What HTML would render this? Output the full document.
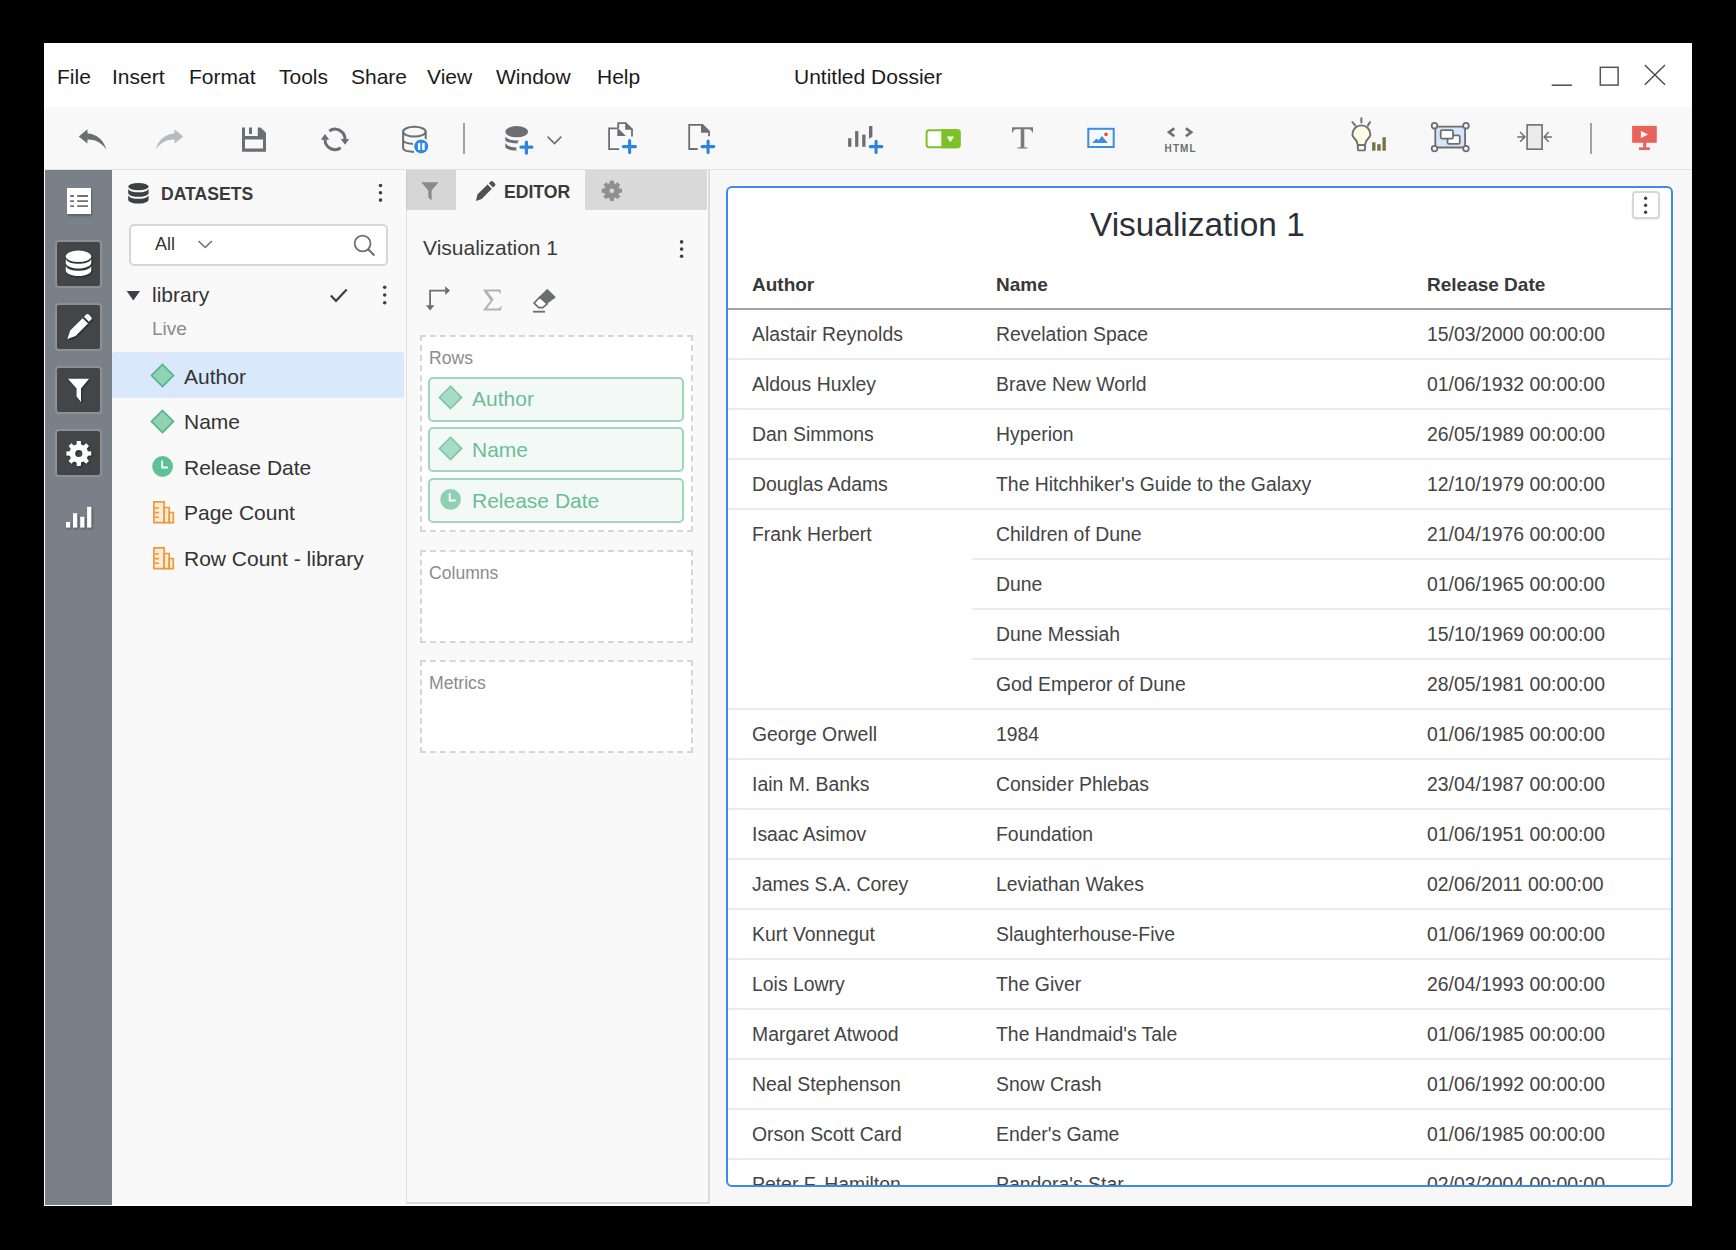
<!DOCTYPE html>
<html><head><meta charset="utf-8">
<style>
*{margin:0;padding:0;box-sizing:border-box}
html,body{width:1736px;height:1250px;background:#000;overflow:hidden;font-family:"Liberation Sans",sans-serif;position:relative}
div,span,svg{position:absolute}
.t{white-space:nowrap;line-height:1}
.mi{font-size:21px;color:#1a1a1a;top:66px}
.sbtn{left:55px;width:47px;height:48px;background:#434548;border:2px solid #8d9094;border-radius:4px}
.fld{font-size:21px;color:#333;left:184px}
.pill{left:428px;width:256px;height:45px;background:#f3f9f6;border:2px solid #9fd6bd;border-radius:5px}
.ptxt{font-size:21px;color:#6cbd97;left:472px}
.dz{left:420px;width:273px;border:2px dashed #d6d6d6;background:#fff}
.dzl{font-size:17.6px;color:#8c8c8c;left:429px}
.row{left:728px;width:943px;height:2px;background:#ebebeb}
.c{font-size:19.4px;color:#444}
.h{font-weight:bold;color:#383838;font-size:19px}
</style></head>
<body>
<!-- window -->
<div style="left:44px;top:43px;width:1648px;height:1163px;background:#fff"></div>
<!-- toolbar -->
<div style="left:45px;top:107px;width:1647px;height:63px;background:#f8f8f8;border-bottom:1px solid #e2e2e2"></div>
<!-- left sidebar -->
<div style="left:45px;top:170px;width:67px;height:1035px;background:#7a8088"></div>
<!-- datasets panel -->
<div style="left:112px;top:170px;width:294px;height:1035px;background:#f9f9f9"></div>
<!-- editor panel -->
<div style="left:406px;top:170px;width:304px;height:1034px;background:#f9f9f9;border-left:1px solid #e0e0e0;border-right:2px solid #dcdcdc;border-bottom:2px solid #d9d9d9"></div>
<!-- canvas -->
<div style="left:710px;top:170px;width:982px;height:1036px;background:#f7f7f7"></div>

<!-- menu -->
<span class="t mi" style="left:57px">File</span>
<span class="t mi" style="left:112px">Insert</span>
<span class="t mi" style="left:189px">Format</span>
<span class="t mi" style="left:279px">Tools</span>
<span class="t mi" style="left:351px">Share</span>
<span class="t mi" style="left:427px">View</span>
<span class="t mi" style="left:496px">Window</span>
<span class="t mi" style="left:597px">Help</span>
<span class="t mi" style="left:794px">Untitled Dossier</span>


<!-- window controls -->
<svg style="left:1540px;top:55px" width="140" height="45" viewBox="0 0 140 45">
 <line x1="11.7" y1="30.2" x2="31.9" y2="30.2" stroke="#4a4a4a" stroke-width="1.5"/>
 <rect x="60.3" y="12.3" width="17.8" height="17.8" fill="none" stroke="#555" stroke-width="1.5"/>
 <path d="M104.8,10.1 L125,29.8 M125,10.1 L104.8,29.8" stroke="#4a4a4a" stroke-width="1.4"/>
</svg>
<!-- toolbar icons -->
<svg style="left:74px;top:124px" width="36" height="30"><path d="M4.8,12.5 L13.4,5.2 L13.6,9.6 C22,10 29,15 32.4,25.4 C27,18.5 21,15.5 13.6,15.6 L13.3,19.6 Z" fill="#6d6e71"/></svg>
<svg style="left:152px;top:124px;transform:scaleX(-1)" width="36" height="30"><path d="M4.8,12.5 L13.4,5.2 L13.6,9.6 C22,10 29,15 32.4,25.4 C27,18.5 21,15.5 13.6,15.6 L13.3,19.6 Z" fill="#b9babc"/></svg>
<svg style="left:242px;top:127px" width="25" height="26"><path fill-rule="evenodd" fill="#6d6e71" d="M0,0.4 H3 V9 H15.8 V0.4 H18.5 L24,5.8 V24.8 H0 Z M3,12.6 V21.4 H21 V12.6 Z M7,0.4 H10 V7 H7 Z"/></svg>
<svg style="left:316px;top:122px" width="38" height="34">
 <path d="M13.3,9.0 A10,10 0 0 1 29,17.4" fill="none" stroke="#6d6e71" stroke-width="3"/>
 <path d="M24.8,17 L33.2,17 L29,22.8 Z" fill="#6d6e71"/>
 <path d="M24.7,25.8 A10,10 0 0 1 9,17.4" fill="none" stroke="#6d6e71" stroke-width="3"/>
 <path d="M4.8,17.8 L13.2,17.8 L9,12 Z" fill="#6d6e71"/>
</svg>
<svg style="left:396px;top:120px" width="40" height="38">
 <ellipse cx="18.4" cy="11.7" rx="11.3" ry="4.9" fill="none" stroke="#6d6e71" stroke-width="2"/>
 <path d="M7.1,11.7 V28 C7.1,30.6 12,31.6 18,31.9 M29.7,11.7 V19.5 M7.1,20 C7.1,22.6 12,23.6 17,23.9" fill="none" stroke="#6d6e71" stroke-width="2"/>
 <circle cx="25.2" cy="26.4" r="8.6" fill="#f8f8f8"/>
 <circle cx="25.2" cy="26.4" r="7" fill="#2e8ae6"/>
 <rect x="22" y="23.1" width="2.3" height="6.8" fill="#fff"/><rect x="26.1" y="23.1" width="2.6" height="6.8" fill="#fff"/>
</svg>
<div style="left:463px;top:123px;width:2px;height:31px;background:#a3a3a3"></div>
<svg style="left:500px;top:120px" width="40" height="38">
 <ellipse cx="16.7" cy="11.7" rx="11.4" ry="5.6" fill="#6d6e71"/>
 <path d="M5.3,16.4 C8,20 14,20.5 18.8,20.5 L17.2,23.4 C11,23.4 6.5,22 5.3,20.5 Z" fill="#6d6e71"/>
 <path d="M5.3,23.1 C8,26.7 12,27.5 16.4,27.5 L16.4,30.5 C10,30.3 6.5,29 5.3,27.2 Z" fill="#6d6e71"/>
 <path d="M26.4,22 V33.2 M21,27.1 H31.9" stroke="#2f83db" stroke-width="3.2" stroke-linecap="round"/>
</svg>
<svg style="left:545px;top:134px" width="20" height="14"><path d="M2.6,2.6 L9.5,9.5 L16.3,2.6" fill="none" stroke="#6d6e71" stroke-width="1.6"/></svg>
<svg style="left:602px;top:116px" width="40" height="42">
 <path d="M16.2,12.5 V7.1 H23.7 L30,13.4 V20.5" fill="none" stroke="#6d6e71" stroke-width="1.8"/>
 <path d="M23.2,6.2 L30.8,13.8 H23.2 Z" fill="#6d6e71"/>
 <path d="M17.1,33.1 H7.1 V12.3 H15.3" fill="none" stroke="#6d6e71" stroke-width="1.8"/>
 <path d="M15.3,11.4 L23.9,19.9 H15.3 Z" fill="#6d6e71"/>
 <path d="M27.6,24.6 V36.5 M21.4,30.6 H33.5" stroke="#2f83db" stroke-width="3.1" stroke-linecap="round"/>
</svg>
<svg style="left:682px;top:118px" width="40" height="40">
 <path d="M15.7,31 H7.2 V6.9 H20.5 L27,13.4 V18.2" fill="none" stroke="#6d6e71" stroke-width="1.8"/>
 <path d="M19,6.1 L27.6,14.7 H19 Z" fill="#6d6e71"/>
 <path d="M26.1,23 V34.5 M20.1,28.6 H31.8" stroke="#2f83db" stroke-width="3.1" stroke-linecap="round"/>
</svg>
<svg style="left:842px;top:118px" width="46" height="40">
 <rect x="6.1" y="20.2" width="3.3" height="8.6" fill="#6d6e71"/>
 <rect x="13.1" y="13.1" width="3.3" height="15.7" fill="#6d6e71"/>
 <rect x="20.2" y="16.6" width="3.3" height="12.2" fill="#6d6e71"/>
 <path d="M27,8 H30.4 V18.8 L27,20.8 Z" fill="#6d6e71"/>
 <path d="M34.1,23.2 V34.5 M28.2,28.6 H39.9" stroke="#2f83db" stroke-width="3.1" stroke-linecap="round"/>
</svg>
<svg style="left:920px;top:125px" width="46" height="28">
 <rect x="6.6" y="5.2" width="33" height="17" rx="2.5" fill="#fff" stroke="#7cc128" stroke-width="2"/>
 <path d="M21.3,4.2 H37.6 A3,3 0 0 1 40.6,7.2 V20.2 A3,3 0 0 1 37.6,23.2 H21.3 Z" fill="#7cc128"/>
 <path d="M26.8,11.4 L34,11.4 L30.4,17.3 Z" fill="#fff"/>
</svg>
<svg style="left:1008px;top:124px" width="30" height="28">
 <path d="M4,3.3 H25 V8.5 H24 C23.6,6 23,5.2 20.5,5.2 H16.3 V22.5 C16.3,23.3 17,23.6 19.5,23.6 V24.5 H9.5 V23.6 C12,23.6 12.7,23.3 12.7,22.5 V5.2 H8.5 C6,5.2 5.4,6 5,8.5 H4 Z" fill="#7a7a7a"/>
</svg>
<svg style="left:1084px;top:124px" width="34" height="28">
 <rect x="4.3" y="4.8" width="25.4" height="18.2" fill="none" stroke="#3b8ee0" stroke-width="2"/>
 <path d="M8.2,19 L12.3,14.4 L14.6,16.2 L18,12.1 L23.8,19 Z" fill="#3b8ee0"/>
 <circle cx="22" cy="10.4" r="1.8" fill="#e94b3c"/>
</svg>
<svg style="left:1162px;top:124px" width="38" height="32">
 <path d="M12.3,4.4 L7,8.3 L12.3,12.2 M23.9,4.4 L29.2,8.3 L23.9,12.2" fill="none" stroke="#6d6e71" stroke-width="2.6"/>
 <text x="2.6" y="28" font-family="Liberation Sans" font-weight="bold" font-size="10" fill="#6d6e71" letter-spacing="1.1">HTML</text>
</svg>
<svg style="left:1345px;top:112px" width="50" height="44">
 <path d="M16.4,6.2 V10.6 M7.4,10.2 L10.2,13.4 M25,10.2 L22.9,13.4" stroke="#6d6e71" stroke-width="2" stroke-linecap="round"/>
 <path d="M12.8,33.1 C12.5,29.5 11.5,28.5 10,27 C8,25 7.4,23.5 7.4,22.4 A9,9 0 0 1 25.4,22.4 C25.4,23.5 24.8,25 22.8,27 C21.3,28.5 20.3,29.5 20,33.1 Z" fill="#fdfbe3" stroke="#6d6e71" stroke-width="1.9"/>
 <rect x="12.8" y="33.1" width="7.3" height="5.3" rx="1.6" fill="#fff" stroke="#6d6e71" stroke-width="1.9"/>
 <rect x="27.1" y="30.3" width="3.4" height="8.4" fill="#7b7240"/>
 <rect x="32.2" y="32.2" width="3.5" height="6.5" fill="#7b7240"/>
 <rect x="37.5" y="25.2" width="3.3" height="13.5" fill="#7b7240"/>
</svg>
<svg style="left:1425px;top:115px" width="50" height="43">
 <rect x="10.3" y="11.7" width="29.8" height="20.8" rx="2" fill="#d5e6f8" stroke="#6d6e71" stroke-width="1.8"/>
 <rect x="22.5" y="20.3" width="12.3" height="8.6" rx="1.5" fill="#fff" stroke="#6d6e71" stroke-width="1.8"/>
 <rect x="15.7" y="15.1" width="12.3" height="8.6" rx="1.5" fill="#fff" stroke="#6d6e71" stroke-width="1.8"/>
 <circle cx="9.5" cy="10.7" r="2.8" fill="#fff" stroke="#6d6e71" stroke-width="1.8"/>
 <circle cx="41" cy="10.7" r="2.8" fill="#fff" stroke="#6d6e71" stroke-width="1.8"/>
 <circle cx="9.5" cy="33.6" r="2.8" fill="#fff" stroke="#6d6e71" stroke-width="1.8"/>
 <circle cx="41" cy="33.6" r="2.8" fill="#fff" stroke="#6d6e71" stroke-width="1.8"/>
</svg>
<svg style="left:1510px;top:115px" width="50" height="42">
 <rect x="17.1" y="9.9" width="15" height="24.3" fill="#ebebeb" stroke="#6d6e71" stroke-width="1.6"/>
 <path d="M7.2,21.9 H15 M10.1,17 L14.9,21.9 L10.1,26.7 M34.2,21.9 H41.9 M38.7,17 L34.2,21.9 L38.7,26.7" fill="none" stroke="#6d6e71" stroke-width="1.5"/>
</svg>
<div style="left:1590px;top:123px;width:2px;height:31px;background:#a3a3a3"></div>
<svg style="left:1620px;top:115px" width="40" height="40">
 <rect x="12.1" y="10.9" width="24.7" height="16.9" fill="#e8645a"/>
 <rect x="23.2" y="27" width="3" height="6" fill="#e8645a"/>
 <rect x="19" y="32.3" width="10.9" height="2.7" fill="#e8645a"/>
 <path d="M20.9,16.1 L28,19.5 L20.9,23 Z" fill="#fff"/>
</svg>


<!-- sidebar icons -->
<div style="left:67px;top:188px;width:24px;height:26px;background:#fff;box-shadow:1px 2px 2px rgba(0,0,0,0.25)"></div>
<svg style="left:67px;top:188px" width="24" height="26"><path d="M3.2,8 H7 M10.2,8 H21 M3.2,13.1 H7 M10.2,13.1 H21 M3.2,18.2 H7 M10.2,18.2 H21" stroke="#707174" stroke-width="1.8"/></svg>
<div class="sbtn" style="top:240px"></div>
<div class="sbtn" style="top:303px"></div>
<div class="sbtn" style="top:366px"></div>
<div class="sbtn" style="top:429px"></div>
<svg style="left:45px;top:230px" width="70" height="260">
 <g fill="#fff" style="filter:drop-shadow(1px 1.5px 1px rgba(0,0,0,.45))">
 <ellipse cx="33.5" cy="26.3" rx="12.7" ry="5.8"/>
 <path d="M20.8,29 C22,32.5 28,33.8 33.5,33.8 C39,33.8 45,32.5 46.2,29 V33.5 C45,37 39,38.5 33.5,38.5 C28,38.5 22,37 20.8,33.5 Z"/>
 <path d="M20.8,36 C22,39.5 28,40.8 33.5,40.8 C39,40.8 45,39.5 46.2,36 V41 C45,44.5 39,46 33.5,46 C28,46 22,44.5 20.8,41 Z"/>
 <path transform="translate(0,7)" d="M22.4,102 L25.2,93.5 L37.6,81.2 L43,86.6 L30.6,99 Z M39,79.8 L41.2,77.6 C42,76.8 43,76.8 43.8,77.6 L46.2,80 C47,80.8 47,81.8 46.2,82.6 L44,84.8 Z"/>
 <path transform="translate(4.5,0)" d="M18.5,148.7 H39.6 L31.5,158.5 V172 L27.1,166.5 V158.5 Z"/>
 <path fill-rule="evenodd" d="M42.92,221.23 L46.24,221.53 L46.24,225.47 L42.92,225.77 L41.85,228.35 L43.99,230.91 L41.21,233.69 L38.65,231.55 L36.07,232.62 L35.77,235.94 L31.83,235.94 L31.53,232.62 L28.95,231.55 L26.39,233.69 L23.61,230.91 L25.75,228.35 L24.68,225.77 L21.36,225.47 L21.36,221.53 L24.68,221.23 L25.75,218.65 L23.61,216.09 L26.39,213.31 L28.95,215.45 L31.53,214.38 L31.83,211.06 L35.77,211.06 L36.07,214.38 L38.65,215.45 L41.21,213.31 L43.99,216.09 L41.85,218.65 Z M37.40,223.50 A3.6,3.6 0 1 0 30.20,223.50 A3.6,3.6 0 1 0 37.40,223.50 Z"/>
 </g>
</svg>
<svg style="left:60px;top:505px" width="40" height="30"><g fill="#fff" style="filter:drop-shadow(1px 1.5px 1px rgba(0,0,0,.4))">
 <rect x="6" y="16.9" width="4.3" height="5.7"/><rect x="13" y="8.2" width="4.3" height="14.4"/><rect x="20.2" y="11.8" width="4.3" height="10.8"/><rect x="27.1" y="1.8" width="4.3" height="20.8"/></g></svg>

<!-- datasets panel content -->
<svg style="left:126px;top:181px" width="26" height="26"><g fill="#3f4044">
 <ellipse cx="12.4" cy="5.6" rx="10.2" ry="3.6"/>
 <path d="M2.2,8 C3.5,10.5 8,11.3 12.4,11.3 C16.8,11.3 21.3,10.5 22.6,8 V12.5 C21.3,15 16.8,15.8 12.4,15.8 C8,15.8 3.5,15 2.2,12.5 Z"/>
 <path d="M2.2,14.5 C3.5,17 8,17.8 12.4,17.8 C16.8,17.8 21.3,17 22.6,14.5 V19 C21.3,21.8 16.8,22.6 12.4,22.6 C8,22.6 3.5,21.8 2.2,19 Z"/></g></svg>
<span class="t" style="left:161px;top:185.5px;font-size:17.6px;font-weight:bold;color:#3a3a3a">DATASETS</span>
<svg style="left:374px;top:182px" width="12" height="24"><circle cx="6.5" cy="3.5" r="1.8" fill="#3f4044"/><circle cx="6.5" cy="10.8" r="1.8" fill="#3f4044"/><circle cx="6.5" cy="18.1" r="1.8" fill="#3f4044"/></svg>
<div style="left:129px;top:224px;width:259px;height:42px;background:#fff;border:2px solid #d5d6d6;border-radius:5px"></div>
<span class="t" style="left:155px;top:235px;font-size:18px;color:#333">All</span>
<svg style="left:195px;top:236px" width="20" height="16"><path d="M3.5,5 L10.2,11.5 L16.9,5" fill="none" stroke="#6d6e71" stroke-width="1.5"/></svg>
<svg style="left:350px;top:230px" width="28" height="30"><circle cx="12.6" cy="13.5" r="7.9" fill="none" stroke="#6d6e71" stroke-width="1.8"/><path d="M18.4,19.5 L24.4,25.5" stroke="#6d6e71" stroke-width="2"/></svg>
<svg style="left:122px;top:286px" width="24" height="20"><path d="M4.7,5 H18 L11.3,14.5 Z" fill="#3f4044"/></svg>
<span class="t" style="left:152px;top:284px;font-size:21px;color:#333">library</span>
<svg style="left:325px;top:284px" width="26" height="22"><path d="M5.8,11.5 L11,16.8 L21.7,5.6" fill="none" stroke="#3f4044" stroke-width="2.2"/></svg>
<svg style="left:378px;top:284px" width="12" height="24"><circle cx="6.7" cy="3.2" r="1.8" fill="#3f4044"/><circle cx="6.7" cy="11" r="1.8" fill="#3f4044"/><circle cx="6.7" cy="18.8" r="1.8" fill="#3f4044"/></svg>
<span class="t" style="left:152px;top:319px;font-size:19px;color:#8a8a8a">Live</span>
<div style="left:112px;top:352px;width:292px;height:46px;background:#d9e9fb;border-radius:2px"></div>
<svg style="left:150px;top:363px" width="26" height="26"><path d="M12.5,1.5 L23.5,12.5 L12.5,23.5 L1.5,12.5 Z" fill="#8fd3b4" stroke="#4fb386" stroke-width="1.6"/></svg>
<span class="t fld" style="top:365.5px">Author</span>
<svg style="left:150px;top:409px" width="26" height="26"><path d="M12.5,1.5 L23.5,12.5 L12.5,23.5 L1.5,12.5 Z" fill="#8fd3b4" stroke="#4fb386" stroke-width="1.6"/></svg>
<span class="t fld" style="top:411px">Name</span>
<svg style="left:150px;top:454px" width="26" height="26"><circle cx="12.6" cy="12.5" r="10.4" fill="#5cc194"/><path d="M12.2,6.5 V13.5 H18" fill="none" stroke="#fff" stroke-width="1.8"/></svg>
<span class="t fld" style="top:457px">Release Date</span>
<svg style="left:150px;top:499px" width="28" height="28"><g fill="#fcebd7" stroke="#ec9a3a" stroke-width="1.7"><path d="M3.9,2.9 H14.2 V23.7 H3.9 Z"/><path d="M14.2,8.5 H19.2 V23.7 H14.2 Z"/><path d="M19.2,13.5 H23.3 V23.7 H19.2 Z"/></g><path d="M4.5,9 H9 M4.5,13.6 H9 M4.5,18.2 H9" stroke="#ec9a3a" stroke-width="1.6"/></svg>
<span class="t fld" style="top:502px">Page Count</span>
<svg style="left:150px;top:545px" width="28" height="28"><g fill="#fcebd7" stroke="#ec9a3a" stroke-width="1.7"><path d="M3.9,2.9 H14.2 V23.7 H3.9 Z"/><path d="M14.2,8.5 H19.2 V23.7 H14.2 Z"/><path d="M19.2,13.5 H23.3 V23.7 H19.2 Z"/></g><path d="M4.5,9 H9 M4.5,13.6 H9 M4.5,18.2 H9" stroke="#ec9a3a" stroke-width="1.6"/></svg>
<span class="t fld" style="top:548px">Row Count - library</span>
<!-- datasets scrollbar -->



<!-- editor panel -->
<div style="left:406px;top:170px;width:50px;height:40px;background:#d6d6d6;border-left:1px solid #cacaca"></div>
<div style="left:585px;top:170px;width:122px;height:40px;background:#d9d9d9"></div>
<svg style="left:416px;top:178px" width="28" height="28"><path d="M5.2,4.2 H22.6 L15.6,12.6 V22.6 L12.3,19.5 V12.6 Z" fill="#8a8a8a"/></svg>
<svg style="left:472px;top:178px" width="28" height="28"><path d="M4,23 L5.4,16.6 L15.5,6.5 L19.8,10.8 L9.7,20.9 Z M16.8,5.2 L18.6,3.4 C19.3,2.7 20.2,2.7 20.9,3.4 L22.9,5.4 C23.6,6.1 23.6,7 22.9,7.7 L21.1,9.5 Z" fill="#505154"/></svg>
<span class="t" style="left:504px;top:183.5px;font-size:17.6px;font-weight:bold;color:#393939">EDITOR</span>
<svg style="left:598px;top:176px" width="28" height="28"><path fill="#8f8f8f" stroke="#8f8f8f" stroke-width="1" stroke-linejoin="round" fill-rule="evenodd" d="M20.93,12.96 L23.52,13.19 L23.52,16.27 L20.93,16.5 L20.09,18.52 L21.76,20.51 L19.59,22.68 L17.6,21.01 L15.58,21.85 L15.35,24.44 L12.27,24.44 L12.04,21.85 L10.02,21.01 L8.03,22.68 L5.86,20.51 L7.53,18.52 L6.69,16.5 L4.1,16.27 L4.1,13.19 L6.69,12.96 L7.53,10.94 L5.86,8.95 L8.03,6.78 L10.02,8.45 L12.04,7.61 L12.27,5.02 L15.35,5.02 L15.58,7.61 L17.6,8.45 L19.59,6.78 L21.76,8.95 L20.09,10.94 Z M16.61,14.73 A2.8,2.8 0 1 0 11.01,14.73 A2.8,2.8 0 1 0 16.61,14.73 Z"/></svg>
<span class="t" style="left:423px;top:237px;font-size:21px;color:#3b3b3b">Visualization 1</span>
<svg style="left:675px;top:238px" width="14" height="24"><circle cx="6.6" cy="3.9" r="1.8" fill="#3f4044"/><circle cx="6.6" cy="11.1" r="1.8" fill="#3f4044"/><circle cx="6.6" cy="18.3" r="1.8" fill="#3f4044"/></svg>
<svg style="left:420px;top:280px" width="36" height="36"><path d="M10.1,26 V10.6 H26" fill="none" stroke="#6d6e71" stroke-width="1.8"/><path d="M25.2,6.2 L30,10.6 L25.2,14.9 Z M6,25.2 H14.4 L10.1,30.4 Z" fill="#6d6e71"/></svg>
<svg style="left:478px;top:284px" width="30" height="30"><path d="M5.3,5.6 H22.5 L23,9.5 H22.1 C21.5,7.8 20.6,7.5 18.5,7.5 H9.5 L15.6,15.6 L9,24.5 H19 C21,24.5 22.2,23.8 23,22 H23.8 L22.8,26.6 H5.2 V26 L12.6,16.5 L5.3,6.3 Z" fill="#b3b3b3"/></svg>
<svg style="left:528px;top:284px" width="32" height="32"><path d="M19.2,4.8 L27.9,13.3 L19.2,19.8 L11.5,12.6 Z" fill="#6d6e71"/><path d="M11.8,13 L19.2,19.8 L14.8,23.6 H10.8 L6.1,19.1 Z" fill="#fff" stroke="#6d6e71" stroke-width="1.7" stroke-linejoin="round"/><path d="M5,27.7 H17" stroke="#6d6e71" stroke-width="1.8"/></svg>

<!-- drop zones -->
<div class="dz" style="top:335px;height:197px"></div>
<span class="t dzl" style="top:349.5px">Rows</span>
<div class="pill" style="top:377px"></div>
<div class="pill" style="top:427px"></div>
<div class="pill" style="top:478px"></div>
<svg style="left:438px;top:385px" width="26" height="26"><path d="M12.5,1.3 L23.6,12.4 L12.5,23.5 L1.4,12.4 Z" fill="#a9dcc5" stroke="#7cc6a2" stroke-width="1.6"/></svg>
<span class="t ptxt" style="top:388px">Author</span>
<svg style="left:438px;top:436px" width="26" height="26"><path d="M12.5,1.3 L23.6,12.4 L12.5,23.5 L1.4,12.4 Z" fill="#a9dcc5" stroke="#7cc6a2" stroke-width="1.6"/></svg>
<span class="t ptxt" style="top:439px">Name</span>
<svg style="left:438px;top:487px" width="26" height="26"><circle cx="12.6" cy="12.4" r="10.4" fill="#90d0b2"/><path d="M11.7,6.3 V13.5 H17.6" fill="none" stroke="#fff" stroke-width="1.8"/></svg>
<span class="t ptxt" style="top:490px">Release Date</span>
<div class="dz" style="top:550px;height:93px"></div>
<span class="t dzl" style="top:565px">Columns</span>
<div class="dz" style="top:660px;height:93px"></div>
<span class="t dzl" style="top:675px">Metrics</span>

<!-- visualization -->
<div style="left:726px;top:186px;width:947px;height:1001px;background:#fff;border:2px solid #3d8be2;border-radius:6px;overflow:hidden">
<span class="t"  style="left:362px;top:19.7px;font-size:33.4px;color:#2b2f36">Visualization 1</span>
<div style="left:904px;top:3px;width:28px;height:28px;background:#fff;border:2px solid #d6d8d8;border-radius:4px;box-shadow:0 1px 2px rgba(0,0,0,.08)"></div>
<svg style="left:904px;top:3px" width="28" height="28"><circle cx="13.6" cy="7.2" r="1.7" fill="#444"/><circle cx="13.6" cy="14.2" r="1.7" fill="#444"/><circle cx="13.6" cy="21.3" r="1.7" fill="#444"/></svg>
<span class="t c h" style="left:24px;top:87px">Author</span>
<span class="t c h" style="left:268px;top:87px">Name</span>
<span class="t c h" style="left:699px;top:87px">Release Date</span>
<div style="left:0;top:120px;width:943px;height:2px;background:#a3a3a3"></div>
<span class="t c" style="left:24px;top:137px">Alastair Reynolds</span>
<span class="t c" style="left:268px;top:137px">Revelation Space</span>
<span class="t c" style="left:699px;top:137px">15/03/2000 00:00:00</span>
<div style="left:0;top:170px;width:943px;height:2px;background:#ebebeb"></div>
<span class="t c" style="left:24px;top:187px">Aldous Huxley</span>
<span class="t c" style="left:268px;top:187px">Brave New World</span>
<span class="t c" style="left:699px;top:187px">01/06/1932 00:00:00</span>
<div style="left:0;top:220px;width:943px;height:2px;background:#ebebeb"></div>
<span class="t c" style="left:24px;top:237px">Dan Simmons</span>
<span class="t c" style="left:268px;top:237px">Hyperion</span>
<span class="t c" style="left:699px;top:237px">26/05/1989 00:00:00</span>
<div style="left:0;top:270px;width:943px;height:2px;background:#ebebeb"></div>
<span class="t c" style="left:24px;top:287px">Douglas Adams</span>
<span class="t c" style="left:268px;top:287px">The Hitchhiker's Guide to the Galaxy</span>
<span class="t c" style="left:699px;top:287px">12/10/1979 00:00:00</span>
<div style="left:0;top:320px;width:943px;height:2px;background:#ebebeb"></div>
<span class="t c" style="left:24px;top:337px">Frank Herbert</span>
<span class="t c" style="left:268px;top:337px">Children of Dune</span>
<span class="t c" style="left:699px;top:337px">21/04/1976 00:00:00</span>
<div style="left:244px;top:370px;width:699px;height:2px;background:#ebebeb"></div>
<span class="t c" style="left:268px;top:387px">Dune</span>
<span class="t c" style="left:699px;top:387px">01/06/1965 00:00:00</span>
<div style="left:244px;top:420px;width:699px;height:2px;background:#ebebeb"></div>
<span class="t c" style="left:268px;top:437px">Dune Messiah</span>
<span class="t c" style="left:699px;top:437px">15/10/1969 00:00:00</span>
<div style="left:244px;top:470px;width:699px;height:2px;background:#ebebeb"></div>
<span class="t c" style="left:268px;top:487px">God Emperor of Dune</span>
<span class="t c" style="left:699px;top:487px">28/05/1981 00:00:00</span>
<div style="left:0;top:520px;width:943px;height:2px;background:#ebebeb"></div>
<span class="t c" style="left:24px;top:537px">George Orwell</span>
<span class="t c" style="left:268px;top:537px">1984</span>
<span class="t c" style="left:699px;top:537px">01/06/1985 00:00:00</span>
<div style="left:0;top:570px;width:943px;height:2px;background:#ebebeb"></div>
<span class="t c" style="left:24px;top:587px">Iain M. Banks</span>
<span class="t c" style="left:268px;top:587px">Consider Phlebas</span>
<span class="t c" style="left:699px;top:587px">23/04/1987 00:00:00</span>
<div style="left:0;top:620px;width:943px;height:2px;background:#ebebeb"></div>
<span class="t c" style="left:24px;top:637px">Isaac Asimov</span>
<span class="t c" style="left:268px;top:637px">Foundation</span>
<span class="t c" style="left:699px;top:637px">01/06/1951 00:00:00</span>
<div style="left:0;top:670px;width:943px;height:2px;background:#ebebeb"></div>
<span class="t c" style="left:24px;top:687px">James S.A. Corey</span>
<span class="t c" style="left:268px;top:687px">Leviathan Wakes</span>
<span class="t c" style="left:699px;top:687px">02/06/2011 00:00:00</span>
<div style="left:0;top:720px;width:943px;height:2px;background:#ebebeb"></div>
<span class="t c" style="left:24px;top:737px">Kurt Vonnegut</span>
<span class="t c" style="left:268px;top:737px">Slaughterhouse-Five</span>
<span class="t c" style="left:699px;top:737px">01/06/1969 00:00:00</span>
<div style="left:0;top:770px;width:943px;height:2px;background:#ebebeb"></div>
<span class="t c" style="left:24px;top:787px">Lois Lowry</span>
<span class="t c" style="left:268px;top:787px">The Giver</span>
<span class="t c" style="left:699px;top:787px">26/04/1993 00:00:00</span>
<div style="left:0;top:820px;width:943px;height:2px;background:#ebebeb"></div>
<span class="t c" style="left:24px;top:837px">Margaret Atwood</span>
<span class="t c" style="left:268px;top:837px">The Handmaid's Tale</span>
<span class="t c" style="left:699px;top:837px">01/06/1985 00:00:00</span>
<div style="left:0;top:870px;width:943px;height:2px;background:#ebebeb"></div>
<span class="t c" style="left:24px;top:887px">Neal Stephenson</span>
<span class="t c" style="left:268px;top:887px">Snow Crash</span>
<span class="t c" style="left:699px;top:887px">01/06/1992 00:00:00</span>
<div style="left:0;top:920px;width:943px;height:2px;background:#ebebeb"></div>
<span class="t c" style="left:24px;top:937px">Orson Scott Card</span>
<span class="t c" style="left:268px;top:937px">Ender's Game</span>
<span class="t c" style="left:699px;top:937px">01/06/1985 00:00:00</span>
<div style="left:0;top:970px;width:943px;height:2px;background:#ebebeb"></div>
<span class="t c" style="left:24px;top:987px">Peter F. Hamilton</span>
<span class="t c" style="left:268px;top:987px">Pandora's Star</span>
<span class="t c" style="left:699px;top:987px">02/03/2004 00:00:00</span>
</div>
</body></html>
